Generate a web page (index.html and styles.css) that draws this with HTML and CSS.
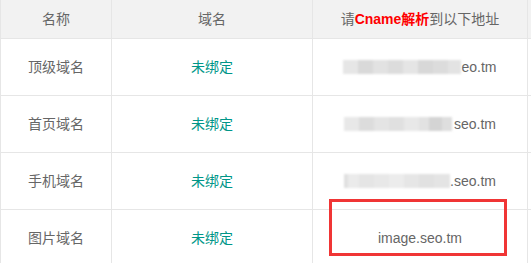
FILE: index.html
```html
<!DOCTYPE html>
<html lang="zh">
<head>
<meta charset="utf-8">
<link rel="stylesheet" href="styles.css">
</head>
<body>
<div class="table">
  <div class="cell head">名称</div>
  <div class="cell head">域名</div>
  <div class="cell head">请<b class="red">Cname解析</b>到以下地址</div>
  <div class="cell head"></div>

  <div class="cell">顶级域名</div>
  <div class="cell green">未绑定</div>
  <div class="cell addr"><span class="mosaic m1"></span><span class="tail">eo.tm</span></div>
  <div class="cell"></div>

  <div class="cell">首页域名</div>
  <div class="cell green">未绑定</div>
  <div class="cell addr"><span class="mosaic m2"></span><span class="tail">seo.tm</span></div>
  <div class="cell"></div>

  <div class="cell">手机域名</div>
  <div class="cell green">未绑定</div>
  <div class="cell addr"><span class="mosaic m3"></span><span class="tail">.seo.tm</span></div>
  <div class="cell"></div>

  <div class="cell">图片域名</div>
  <div class="cell green">未绑定</div>
  <div class="cell addr mark">image.seo.tm<span class="highlight"></span></div>
  <div class="cell"></div>
</div>
</body>
</html>
```
FILE: styles.css
```css
html, body {
  margin: 0;
  padding: 0;
  background: #fff;
}
body {
  font-family: "Liberation Sans", "Noto Sans CJK SC", sans-serif;
  font-size: 14px;
  color: #666;
  overflow: hidden;
}
.table {
  display: grid;
  grid-template-columns: 110px 200px 214px 1fr;
  grid-template-rows: 38px 56px 56px 56px 56px;
  gap: 1px;
  padding-left: 1px;
  background: #e6e6e6;
}
.cell {
  background: #fff;
  display: flex;
  align-items: center;
  justify-content: center;
  line-height: 20px;
  white-space: nowrap;
  min-width: 0;
}
.head {
  background: #f2f2f2;
}
.red {
  color: #ff0000;
  font-weight: bold;
}
.green {
  color: #009688;
}
.addr {
  position: relative;
}
.mosaic {
  display: inline-block;
  height: 14px;
  filter: blur(0.8px);
}
.m1 {
  width: 118px;
  background: linear-gradient(90deg, #e6e6e6 0 15px, #d9d9d9 15px 30px, #e2e2e2 30px 45px, #dcdcdc 45px 60px, #e5e5e5 60px 75px, #d8d8d8 75px 90px, #dcdcdc 90px 105px, #e3e3e3 105px 118px);
}
.m2 {
  width: 108px;
  margin-right: 2px;
  background: linear-gradient(90deg, #e8e8e8 0 15px, #dcdcdc 15px 30px, #e4e4e4 30px 45px, #e0e0e0 45px 60px, #e8e8e8 60px 75px, #e2e2e2 75px 85px, #d4d4d4 85px 98px, #dedede 98px 108px);
}
.m3 {
  width: 106px;
  background: linear-gradient(90deg, #e0e0e0 0 4px, #ebebeb 4px 15px, #e5e5e5 15px 30px, #e8e8e8 30px 45px, #ececec 45px 60px, #e6e6e6 60px 75px, #e1e1e1 75px 90px, #e4e4e4 90px 106px);
}
.highlight {
  position: absolute;
  left: 16px;
  top: -11px;
  width: 178px;
  height: 57px;
  box-sizing: border-box;
  border: 3px solid #f03535;
}
```
